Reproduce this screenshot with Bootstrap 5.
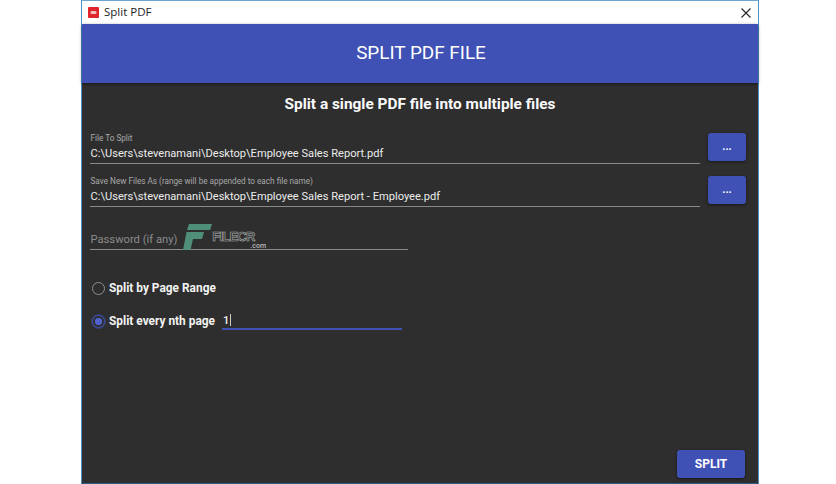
<!doctype html>
<html lang="en"><head><meta charset="utf-8"><title>Split PDF</title>
<link href="https://cdn.jsdelivr.net/npm/bootstrap@5.3.0/dist/css/bootstrap.min.css" rel="stylesheet">
<style>
html,body{height:484px;overflow:hidden;background:#fff}
body{font-family:Roboto,"Liberation Sans",sans-serif;color:#fff}
.appwin{width:678px;height:484px;margin-left:81px;border:1px solid #4d93c4;border-top-color:#6aa6d0;border-bottom-color:#2b5f80;background:#2e2e2e}
.tbar{height:23px;background:#fff;color:#222;font-family:"Open Sans","Liberation Sans",sans-serif;font-size:11.5px;padding:0 7px 1px 6px}
.appicon{width:11px;height:11px;margin-right:5px}
.closex{margin-top:1px}
.hdr{height:59px;background:#3f51b5;font-size:18.9px;padding-left:2px;box-shadow:0 1px 3px rgba(0,0,0,.5)}
.subttl{font-size:15.4px;font-weight:700;text-align:center;margin-top:11px;height:21px;line-height:21px;color:#fafafa}
.gaprow{height:18px}
.frow{padding:0 12px 0 8px;gap:8px;height:43px}
.fbox{flex:1;height:31px;border-bottom:1px solid #8a8a8a;padding-left:.5px;align-self:flex-start}
.flabel{font-size:8.2px;color:#a9a9a9;line-height:10px;height:10px}
.fval{font-size:11.1px;color:#ececec;line-height:16px;margin-top:3px}
.dots,.splitbtn{background:#3f51b5;border:0;border-radius:3px;color:#fff;box-shadow:0 1px 3px rgba(0,0,0,.5);padding:0}
.dots{width:38px;height:28px;font-size:11px;font-weight:700;line-height:28px}
.pwd{width:318px;margin-left:8px;height:18px;border-bottom:1px solid #8a8a8a;font-size:11.2px;color:#8b8b8b;line-height:16px;margin-top:13px;padding-left:.5px}
.wm{margin-left:6px;margin-top:-9px;position:relative;height:28px}
.wmtxt{font-family:"Liberation Sans",sans-serif;font-weight:700;font-size:13px;color:#2e2e2e;-webkit-text-stroke:.6px #aab2ae;line-height:13px;margin-top:7px;letter-spacing:-.8px}
.wmcom{position:absolute;left:67px;top:20px;font-size:7px;line-height:7px;font-weight:500;color:#bbb}
.optrow{padding-left:10px;font-size:11.9px;font-weight:700;color:#f2f2f2;height:18px}
.rad{width:13px;height:13px;border-radius:50%;border:1.5px solid #8f8f8f;margin:-1px 4px 0 0;flex:none}
.rad.on{border-color:#3f51b5;background:radial-gradient(circle,#4f62cb 0 3.4px,#2e2e2e 4px);box-shadow:0 0 0 1px rgba(63,81,181,.5)}
.numbox{width:180px;height:16px;border-bottom:2px solid #3f51b5;margin-left:7px;font-weight:500;font-size:11px;line-height:12px;padding-left:1px}
.caret{display:inline-block;width:1px;height:12px;background:#ccc;vertical-align:-2px;margin-left:1px}
.foot{padding-right:13px;margin-bottom:5px}
.splitbtn{width:68px;height:28px;font-size:12px;font-weight:700}
.opt2{margin-top:15px}
.opt1{margin-top:30px}
</style></head>
<body>
<div class="appwin d-flex flex-column">
  <div class="tbar d-flex align-items-center">
    <svg class="appicon" viewBox="0 0 11 11"><rect width="11" height="11" rx="1" fill="#e0242c"/><rect x="2.500" y="4" width="6" height="3" rx="1.500" fill="#f3c0c0"/></svg>
    <span>Split PDF</span>
    <svg class="ms-auto closex" width="10" height="10" viewBox="0 0 10 10"><path d="M.5.5l9 9M9.5.5l-9 9" stroke="#222" stroke-width="1.1" fill="none"/></svg>
  </div>
  <div class="hdr d-flex align-items-center justify-content-center">SPLIT PDF FILE</div>
  <div class="subttl">Split a single PDF file into multiple files</div>
  <div class="gaprow flex-shrink-0"></div>
  <div class="frow d-flex">
    <div class="fbox"><div class="flabel">File To Split</div><div class="fval">C:\Users\stevenamani\Desktop\Employee Sales Report.pdf</div></div>
    <button class="dots">...</button>
  </div>
  <div class="frow d-flex">
    <div class="fbox"><div class="flabel">Save New Files As (range will be appended to each file name)</div><div class="fval">C:\Users\stevenamani\Desktop\Employee Sales Report - Employee.pdf</div></div>
    <button class="dots">...</button>
  </div>
  <div class="pwd d-flex">
    <span>Password (if any)</span>
    <div class="wm d-flex">
      <svg width="29" height="28" viewBox="0 0 29 28"><path d="M6 1H29L27 7H4ZM3.500 9H21L19 16H10L7.500 27H0Z" fill="#4f8f7a"/></svg>
      <span class="wmtxt">FILECR</span><span class="wmcom">.com</span>
    </div>
  </div>
  <div class="optrow opt1 d-flex align-items-center"><span class="rad"></span><span>Split by Page Range</span></div>
  <div class="optrow opt2 d-flex align-items-center"><span class="rad on"></span><span>Split every nth page</span><div class="numbox">1<span class="caret"></span></div></div>
  <div class="foot mt-auto d-flex justify-content-end"><button class="splitbtn">SPLIT</button></div>
</div>
<script src="https://cdn.jsdelivr.net/npm/bootstrap@5.3.0/dist/js/bootstrap.bundle.min.js"></script>
</body></html>
